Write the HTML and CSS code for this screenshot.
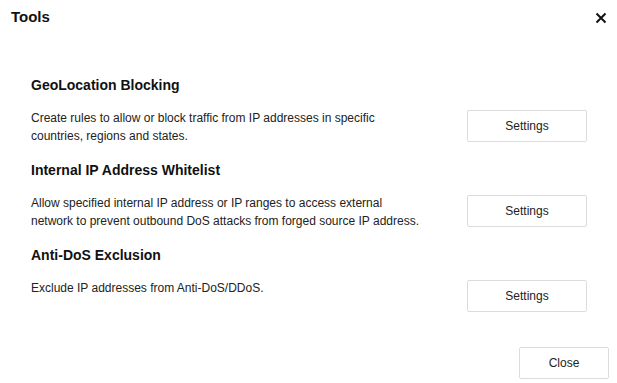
FILE: index.html
```html
<!DOCTYPE html>
<html>
<head>
<meta charset="utf-8">
<link rel="stylesheet" href="styles.css">
</head>
<body>
<div class="dialog">
  <div class="header">
    <div class="title">Tools</div>
    <button class="icon-close" aria-label="Close">
      <svg width="12" height="12" viewBox="0 0 12 12"><path d="M1.5 1.5 L10.5 10.5 M10.5 1.5 L1.5 10.5" stroke="#111" stroke-width="2" fill="none"/></svg>
    </button>
  </div>
  <div class="content">
    <div class="section">
      <div class="section-title">GeoLocation Blocking</div>
      <div class="row">
        <div class="desc">Create rules to allow or block traffic from IP addresses in specific countries, regions and states.</div>
        <button class="btn btn-settings">Settings</button>
      </div>
    </div>
    <div class="section">
      <div class="section-title">Internal IP Address Whitelist</div>
      <div class="row">
        <div class="desc">Allow specified internal IP address or IP ranges to access external network to prevent outbound DoS attacks from forged source IP address.</div>
        <button class="btn btn-settings">Settings</button>
      </div>
    </div>
    <div class="section">
      <div class="section-title">Anti-DoS Exclusion</div>
      <div class="row">
        <div class="desc">Exclude IP addresses from Anti-DoS/DDoS.</div>
        <button class="btn btn-settings">Settings</button>
      </div>
    </div>
  </div>
  <div class="footer">
    <button class="btn btn-close">Close</button>
  </div>
</div>
</body>
</html>
```
FILE: styles.css
```css
* { box-sizing: border-box; }
html, body { margin: 0; padding: 0; background: #fff; }
body { font-family: "Liberation Sans", Arial, sans-serif; color: #222; }
.dialog { width: 617px; height: 383px; display: flex; flex-direction: column; }
.header { display: flex; justify-content: space-between; align-items: center; padding: 7px 10px 0 11px; height: 27px; }
.title { font-size: 15px; font-weight: bold; line-height: 18px; color: #111; }
.icon-close { border: 0; background: none; padding: 0; width: 12px; height: 12px; display: flex; margin-top: 2px; cursor: pointer; }
.content { padding: 50px 30px 0 31px; flex: 1; }
.section { margin-bottom: 17px; }
.section-title { font-size: 14px; font-weight: bold; line-height: 17px; color: #111; margin-bottom: 15px; }
.row { display: flex; justify-content: space-between; align-items: flex-start; }
.desc { width: 392px; font-size: 12px; line-height: 18px; color: #222; }
.btn { font-family: "Liberation Sans", Arial, sans-serif; font-size: 12px; color: #222; background: #fff; border: 1px solid #dcdcdc; border-radius: 2px; height: 32px; padding: 0; }
.btn-settings { width: 120px; margin-top: 1px; }
.footer { display: flex; justify-content: flex-end; padding: 0 8px 4px 0; }
.btn-close { width: 90px; }
```
